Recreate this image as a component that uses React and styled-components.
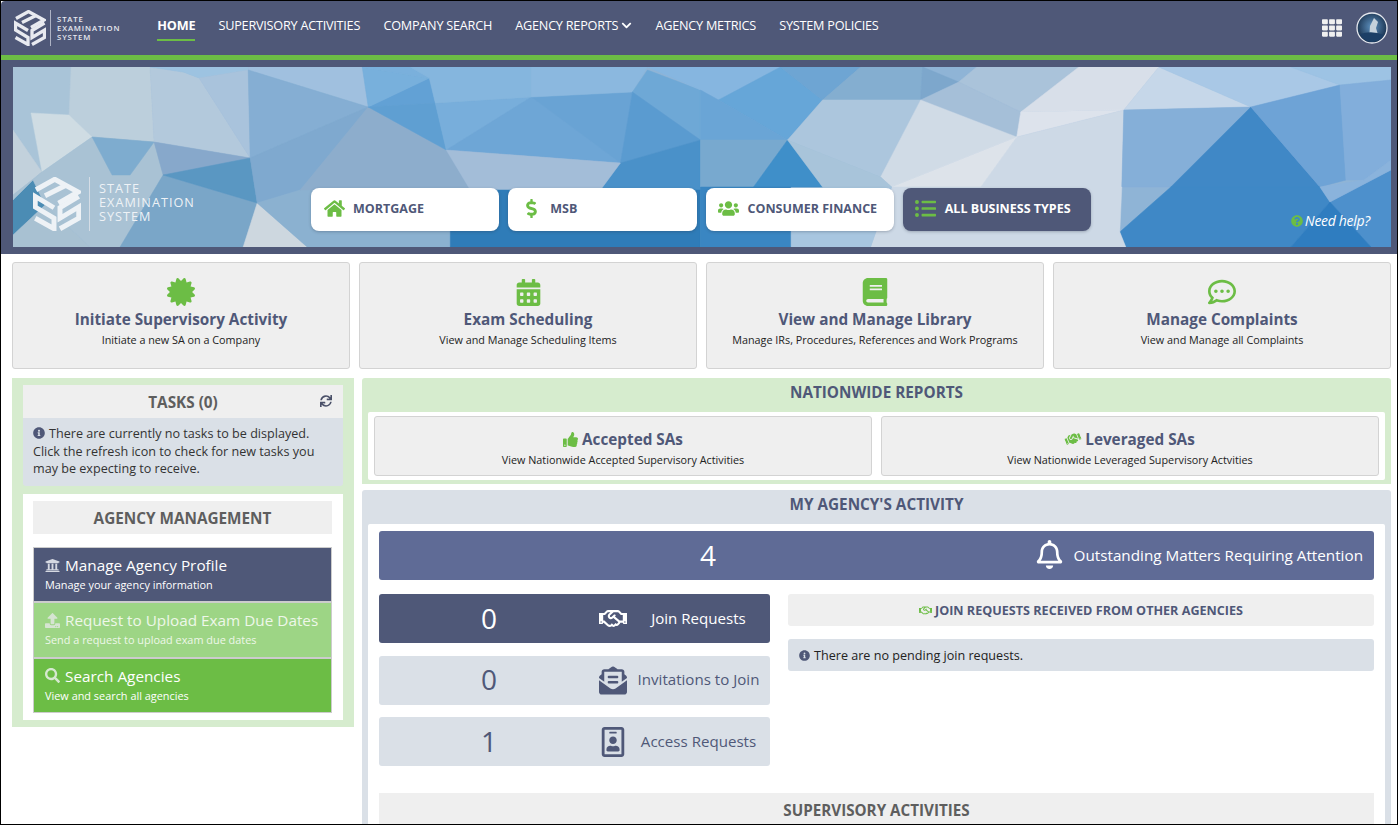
import React from "react";
import styled, { createGlobalStyle } from "styled-components";
import {
  FaCertificate, FaCalendarAlt, FaBook, FaRegCommentDots, FaThumbsUp, FaRegHandshake, FaHandshake,
  FaEnvelopeOpenText, FaRegIdBadge, FaUniversity, FaUpload, FaSearch, FaSync, FaInfoCircle, FaHome,
  FaDollarSign, FaUsers, FaListUl, FaQuestionCircle, FaTh, FaRegBell, FaChevronDown,
} from "react-icons/fa";

const NAVY = "#4f5878";
const GREEN = "#6cbd45";
const GREY = "#efefef";
const SLATE = "#dae0e7";
const PALE = "#d6ecce";

const Global = createGlobalStyle`
  html, body { margin: 0; padding: 0; background: #fff; }
  * { box-sizing: border-box; }
  body { font-family: "Open Sans", "Liberation Sans", sans-serif; }
`;

const Frame = styled.div`
  width: 1398px;
  height: 825px;
  border: 1px solid #000;
  overflow: hidden;
  background: #fff;
`;

const Header = styled.header`
  background: ${NAVY};
  padding-bottom: 7px;
  border-top-left-radius: 4px;
`;

const Nav = styled.nav`
  height: 54px;
  display: flex;
  align-items: center;
  padding: 0 9px 0 13px;
`;

const Brand = styled.div`
  display: flex;
  align-items: center;
  color: ${(p) => p.$color};
`;

const Divider = styled.span`
  display: block;
  width: 1px;
  align-self: stretch;
  background: ${(p) => p.$color};
  margin: ${(p) => p.$margin};
`;

const BrandText = styled.div`
  font-size: ${(p) => p.$size}px;
  line-height: ${(p) => p.$line}px;
  letter-spacing: ${(p) => p.$track}px;
  font-weight: ${(p) => p.$weight};
  padding: ${(p) => p.$pad};
  text-transform: uppercase;
`;

const Links = styled.div`
  display: flex;
  gap: 23.3px;
  margin-left: 37px;
  flex: 1;
`;

const NavLink = styled.a`
  display: flex;
  align-items: center;
  gap: 3px;
  height: 30px;
  margin-bottom: 4px;
  color: #fff;
  font-size: 12.7px;
  letter-spacing: -0.25px;
  font-weight: ${(p) => (p.$active ? 700 : 400)};
  border-bottom: 2px solid ${(p) => (p.$active ? GREEN : "transparent")};
`;

const NavRight = styled.div`
  display: flex;
  align-items: center;
  gap: 14px;
  color: #f0f0f0;
`;

const Stripe = styled.div`
  height: 5px;
  background: ${GREEN};
  margin-bottom: 7px;
`;

const Hero = styled.section`
  position: relative;
  margin: 0 6px 0 12px;
  height: 180px;
  overflow: hidden;
  display: flex;
  align-items: flex-end;
  padding-bottom: 16px;
  background: #8fb4d6;
`;

const HeroArt = styled.svg`
  position: absolute;
  inset: 0;
  width: 100%;
  height: 100%;
`;

const HeroBrand = styled.div`
  position: relative;
  flex: 0 0 298px;
  padding-left: 20px;
`;

const Types = styled.div`
  position: relative;
  display: flex;
  gap: 9px;
`;

const TypeButton = styled.a`
  width: 188.25px;
  height: 43px;
  border-radius: 8px;
  display: flex;
  align-items: center;
  gap: 8px;
  padding: 0 0 2px 12px;
  background: ${(p) => (p.$dark ? NAVY : "#fff")};
  color: ${(p) => (p.$dark ? "#fff" : NAVY)};
  font-weight: 700;
  font-size: 12.5px;
  box-shadow: 0 1px 3px rgba(40, 50, 70, 0.3);
`;

const TypeIcon = styled.span`
  flex: 0 0 22px;
  display: flex;
  justify-content: center;
  color: ${GREEN};
`;

const Help = styled.a`
  position: absolute;
  right: 21px;
  bottom: 17px;
  display: flex;
  align-items: center;
  gap: 2px;
  color: #fff;
  font-style: italic;
  font-size: 14px;
  letter-spacing: -0.3px;
  svg { color: ${GREEN}; }
`;

const Quick = styled.div`
  display: grid;
  grid-template-columns: repeat(4, 1fr);
  gap: 9px;
  padding: 8px 6px 0 11px;
`;

const QuickCard = styled.a`
  height: 107px;
  background: ${GREY};
  border: 1px solid #d3d3d3;
  border-radius: 3px;
  display: flex;
  flex-direction: column;
  align-items: center;
  padding-top: 14px;
  svg { color: ${GREEN}; }
`;

const IconSlot = styled.div`
  height: 30px;
  display: flex;
  align-items: center;
  justify-content: center;
`;

const QuickTitle = styled.div`
  margin-top: 1px;
  font-size: 15.3px;
  line-height: 22px;
  font-weight: 700;
  color: ${NAVY};
`;

const SubText = styled.div`
  font-size: 10.8px;
  line-height: 15px;
  color: #222;
  margin-top: ${(p) => p.$top}px;
`;

const Columns = styled.div`
  display: grid;
  grid-template-columns: 342px 1029px;
  gap: 8px;
  padding: 9px 6px 0 11px;
  align-items: start;
`;

const LeftPanel = styled.aside`
  background: ${PALE};
  padding: 7px 11px;
  height: 349px;
`;

const Head = styled.div`
  height: ${(p) => p.$h || 33}px;
  padding-bottom: ${(p) => p.$pb || 0}px;
  display: flex;
  align-items: center;
  justify-content: center;
  position: relative;
  background: ${(p) => p.$bg || "transparent"};
  color: ${(p) => p.$color || NAVY};
  font-size: 15.3px;
  font-weight: 700;
`;

const RefreshBtn = styled.span`
  position: absolute;
  right: 11px;
  top: 10px;
  color: #4a5068;
  display: flex;
`;

const TaskNote = styled.div`
  background: ${SLATE};
  height: 68px;
  padding: 7px 10px;
  font-size: 12.6px;
  line-height: 17.5px;
  color: #333;
  border-radius: 0 0 3px 3px;
  svg { color: ${NAVY}; vertical-align: -1px; margin-right: 4px; }
`;

const AgencyBox = styled.div`
  background: #fff;
  margin-top: 8px;
  height: 226px;
  padding: 7px 11px 0 10px;
`;

const MenuList = styled.div`
  margin-top: 13px;
  border: 1px solid #ccc;
  display: flex;
  flex-direction: column;
  gap: 2px;
  background: #ccc;
`;

const MenuItem = styled.a`
  height: 53.4px;
  background: ${(p) => p.$bg};
  color: ${(p) => p.$fg};
  padding: 6px 11px 0;
`;

const MenuTitle = styled.div`
  display: flex;
  align-items: center;
  gap: 5px;
  font-size: 15.3px;
  line-height: 22px;
  white-space: nowrap;
`;

const MenuSub = styled.div`
  font-size: 10.9px;
  line-height: 15px;
  margin-top: 1px;
`;

const RightCol = styled.main`
  display: flex;
  flex-direction: column;
  gap: 6px;
`;

const Panel = styled.section`
  background: ${(p) => p.$bg};
  border-radius: 3px 3px 0 0;
  padding: 0 6px ${(p) => p.$pb}px;
`;

const Inner = styled.div`
  background: #fff;
  padding: ${(p) => p.$pad};
  border-radius: 2px;
`;

const ReportGrid = styled.div`
  display: grid;
  grid-template-columns: 498px 498px;
  gap: 9px;
`;

const ReportCard = styled.a`
  height: 60px;
  background: ${GREY};
  border: 1px solid #d3d3d3;
  border-radius: 3px;
  display: flex;
  flex-direction: column;
  align-items: center;
  padding-top: 12px;
`;

const ReportTitle = styled.div`
  display: flex;
  align-items: center;
  gap: 4px;
  font-size: 15.3px;
  line-height: 20px;
  font-weight: 700;
  color: ${NAVY};
  svg { color: ${GREEN}; }
`;

const SlantedShake = styled(FaHandshake)`
  transform: rotate(-22deg);
`;

const Matters = styled.div`
  height: 49px;
  padding-bottom: 2px;
  background: #5f6b96;
  border-radius: 3px;
  display: flex;
  align-items: center;
  color: #fff;
`;

const MattersCount = styled.div`
  flex: 0 0 640px;
  padding-left: 18px;
  text-align: center;
  font-size: 28px;
`;

const MattersLabel = styled.div`
  flex: 1;
  display: flex;
  justify-content: flex-end;
  align-items: center;
  gap: 10px;
  padding-right: 11px;
  font-size: 15.25px;
  white-space: nowrap;
`;

const ActivityGrid = styled.div`
  display: grid;
  grid-template-columns: 391px 586px;
  gap: 18px;
  margin-top: 14px;
  height: 199px;
`;

const Stats = styled.div`
  display: flex;
  flex-direction: column;
  gap: 12.5px;
`;

const Stat = styled.a`
  height: 49px;
  border-radius: 3px;
  display: grid;
  grid-template-columns: 220px 28px 1fr;
  align-items: center;
  background: ${(p) => (p.$dark ? NAVY : SLATE)};
  color: ${(p) => (p.$dark ? "#fff" : NAVY)};
`;

const StatCount = styled.div`
  text-align: center;
  font-size: 28px;
  padding-bottom: 2px;
`;

const StatIcon = styled.div`
  display: flex;
  justify-content: center;
`;

const StatLabel = styled.div`
  text-align: center;
  font-size: 15.1px;
  padding-bottom: 2px;
`;

const JoinHead = styled.div`
  height: 32px;
  background: ${GREY};
  border-radius: 3px;
  display: flex;
  align-items: center;
  justify-content: center;
  gap: 3px;
  font-size: 12.6px;
  font-weight: 700;
  color: ${NAVY};
  svg { color: ${GREEN}; }
`;

const JoinNote = styled.div`
  height: 32px;
  margin-top: 13px;
  background: ${SLATE};
  border-radius: 3px;
  display: flex;
  align-items: center;
  gap: 4px;
  padding-left: 11px;
  font-size: 12.6px;
  color: #222;
  svg { color: ${NAVY}; }
`;

const SectionBar = styled.div`
  height: 36px;
  padding-bottom: 3px;
  background: ${GREY};
  display: flex;
  align-items: center;
  justify-content: center;
  font-size: 15.2px;
  font-weight: 700;
  color: #5e5e5e;
`;

const Logo = ({ size }) => (
  <svg width={size} height={size * 36 / 32} viewBox="0 0 32 36" fill="none" stroke="currentColor" strokeWidth="3.3" strokeLinejoin="miter">
    <polyline points="2,8.5 14.5,1.5 30,10 17,17.5" />
    <polyline points="8,12.5 22,5.5" />
    <polyline points="14,20.5 1.5,13 1.5,20 14,27.5 14,34.5 1.5,27.5" />
    <polyline points="30.5,13 18,20.5 18,27.5 30.5,20 30.5,27.5 18,34.5" />
  </svg>
);

const shards = [
  ["13,67 71,67 69,115 31,113 42,172 13,130", "#a9c4d8"],
  ["71,67 150,67 154,142 92,137 69,115", "#bccfdc"],
  ["150,67 183,72 199,78 250,158 154,142", "#b3c9dc"],
  ["150,67 248,67 248,70 199,78 183,72", "#9dc3e1"],
  ["199,78 248,70 250,158", "#a9c3dc"],
  ["31,113 69,115 92,137 42,172", "#cfdce3"],
  ["13,130 42,172 13,195", "#c2d1dc"],
  ["13,200 33,180 45,205 13,235", "#4b8cb4"],
  ["13,195 42,172 33,180 13,200", "#a8c1d2"],
  ["13,235 45,205 90,247 13,247", "#a8c1d2"],
  ["42,172 92,137 154,142 163,175 120,247 90,247 45,205 33,180", "#a9c2d4"],
  ["92,137 154,142 130,175 112,175", "#7eaccf"],
  ["154,142 250,158 163,175", "#87a8cb"],
  ["163,175 257,203 243,247 120,247", "#7aa6c8"],
  ["163,175 250,158 257,203", "#5a97c2"],
  ["257,203 243,247 307,247", "#cdd7df"],
  ["248,67 362,67 368,107 248,70", "#a0c0df"],
  ["248,70 368,107 250,158", "#85aed3"],
  ["250,158 368,107 300,190 257,203", "#7fa9cf"],
  ["257,203 300,190 470,190 450,247 307,247", "#8bb1d0"],
  ["368,107 446,150 470,190 300,190", "#8dadcc"],
  ["368,107 435,103 429,78", "#62a1d5"],
  ["362,67 429,78 368,107", "#78b0dc"],
  ["362,67 410,67 429,78", "#7ab0dc"],
  ["368,107 435,103 446,150", "#5f9fd2"],
  ["435,103 531,97 446,150", "#78aedb"],
  ["531,97 620,163 446,150", "#6ea6d6"],
  ["531,97 632,92 620,163", "#69a3d4"],
  ["410,67 531,67 531,97 435,103 429,78", "#85b6de"],
  ["531,67 647,67 632,92 531,97", "#8bb8df"],
  ["647,70 700,90 700,140 632,92", "#6ea8d6"],
  ["632,92 700,140 620,163", "#5a9bd0"],
  ["620,163 700,140 700,190 600,190", "#4a91c9"],
  ["446,150 620,163 600,190 470,190", "#a3bdd8"],
  ["450,190 700,190 700,247 450,247", "#2f7cb8"],
  ["647,67 780,67 718,100 700,90", "#86b6e0"],
  ["718,100 780,67 822,100 787,140", "#66a6d8"],
  ["700,90 718,100 787,140 700,140", "#6aa5d6"],
  ["780,67 860,67 822,100", "#6ea5d3"],
  ["860,67 922,67 920,100 822,100", "#84aed0"],
  ["922,67 958,82 920,100", "#7da7cc"],
  ["958,82 976,67 1078,67 1020,112", "#aac3da"],
  ["920,100 958,82 1020,112 1016,137", "#a5bfd8"],
  ["822,100 920,100 880,177 787,140", "#acc6dd"],
  ["920,100 1016,137 891,187 880,177", "#d0dbe6"],
  ["1078,67 1158,67 1123,110 1020,112", "#d8dfe9"],
  ["1020,112 1123,110 1016,137", "#dde3ec"],
  ["1016,137 1123,110 1121,187 980,187", "#cdd9e6"],
  ["1016,137 980,187 891,187", "#dde3ea"],
  ["1158,67 1250,107 1123,110", "#c6d7e9"],
  ["1158,67 1290,67 1339,85 1250,107", "#a9c8e6"],
  ["1290,67 1390,67 1390,80 1339,85", "#9dc3e4"],
  ["1123,110 1250,107 1170,187 1121,187", "#85afd8"],
  ["1250,107 1170,187 1319,187", "#4088c6"],
  ["1250,107 1339,85 1345,180 1319,187", "#6ea3d6"],
  ["1339,85 1390,80 1390,160 1363,180 1345,180", "#82aedb"],
  ["1119,232 1170,187 1319,187 1329,202 1290,247 1125,247", "#3f88c6"],
  ["1329,202 1390,170 1390,247 1370,247", "#4d90cc"],
  ["1319,187 1363,180 1390,160 1390,170 1329,202", "#8ab3dc"],
  ["1329,202 1290,247 1370,247", "#2f7dc0"],
  ["891,187 1121,187 1119,232 1125,247 870,247", "#cdd9e6"],
  ["790,187 891,187 870,247 790,247", "#a8c6e0"],
  ["700,140 787,140 753,187 700,187", "#78a9cf"],
  ["787,140 753,187 822,187", "#3f8fc9"],
  ["787,140 880,177 891,187 822,187", "#a8c4da"],
  ["700,187 790,187 790,247 700,247", "#3a86c2"],
];

const types = [
  { label: "MORTGAGE", Icon: FaHome, size: 21 },
  { label: "MSB", Icon: FaDollarSign, size: 19 },
  { label: "CONSUMER FINANCE", Icon: FaUsers, size: 21 },
  { label: "ALL BUSINESS TYPES", Icon: FaListUl, size: 21, dark: true },
];

const quick = [
  { title: "Initiate Supervisory Activity", sub: "Initiate a new SA on a Company", Icon: FaCertificate, size: 28 },
  { title: "Exam Scheduling", sub: "View and Manage Scheduling Items", Icon: FaCalendarAlt, size: 27 },
  { title: "View and Manage Library", sub: "Manage IRs, Procedures, References and Work Programs", Icon: FaBook, size: 28 },
  { title: "Manage Complaints", sub: "View and Manage all Complaints", Icon: FaRegCommentDots, size: 28 },
];

const stats = [
  { n: 0, label: "Join Requests", Icon: FaRegHandshake, size: 29, dark: true },
  { n: 0, label: "Invitations to Join", Icon: FaEnvelopeOpenText, size: 29 },
  { n: 1, label: "Access Requests", Icon: FaRegIdBadge, size: 30 },
];

export default function App() {
  return (
    <Frame>
      <Global />
      <Header>
        <Nav>
          <Brand $color="#e8eaf0">
            <Logo size={32} />
            <Divider $color="#aeb3c4" $margin="0 6px 0 4px" />
            <BrandText $size={7.7} $line={9} $track={0.9} $weight={600} $pad="1px 0 0">
              State<br />Examination<br />System
            </BrandText>
          </Brand>
          <Links>
            <NavLink $active>HOME</NavLink>
            <NavLink>SUPERVISORY ACTIVITIES</NavLink>
            <NavLink>COMPANY SEARCH</NavLink>
            <NavLink>AGENCY REPORTS <FaChevronDown size={11} /></NavLink>
            <NavLink>AGENCY METRICS</NavLink>
            <NavLink>SYSTEM POLICIES</NavLink>
          </Links>
          <NavRight>
            <FaTh size={20} />
            <svg width="32" height="32" viewBox="0 0 32 32">
              <defs>
                <radialGradient id="av" cx="50%" cy="45%" r="60%">
                  <stop offset="0%" stopColor="#5f93c2" />
                  <stop offset="100%" stopColor="#10253f" />
                </radialGradient>
              </defs>
              <circle cx="16" cy="16" r="15" fill="url(#av)" stroke="#e6e9ef" strokeWidth="1.3" />
              <path d="M13 27 L14 14 L18 6 L22 10 L20 16 L23 26 Z" fill="#c5d2dc" />
              <path d="M4 22 Q16 18 28 23 Q24 30 16 30 Q8 30 4 22 Z" fill="#1c3f66" />
            </svg>
          </NavRight>
        </Nav>
        <Stripe />
        <Hero>
          <HeroArt viewBox="13 67 1377 180" preserveAspectRatio="none" aria-hidden="true">
            {shards.map(([points, fill]) => (
              <polygon key={points} points={points} fill={fill} stroke={fill} strokeWidth="0.5" />
            ))}
          </HeroArt>
          <HeroBrand>
            <Brand $color="#eef2f6">
              <Logo size={48} />
              <Divider $color="#d5dde6" $margin="0 9px 0 8px" />
              <BrandText $size={12.7} $line={14} $track={1} $weight={500} $pad="0 0 4px">
                State<br />Examination<br />System
              </BrandText>
            </Brand>
          </HeroBrand>
          <Types>
            {types.map(({ label, Icon, size, dark }) => (
              <TypeButton key={label} $dark={dark}>
                <TypeIcon><Icon size={size} /></TypeIcon>
                {label}
              </TypeButton>
            ))}
          </Types>
          <Help><FaQuestionCircle size={12} />Need help?</Help>
        </Hero>
      </Header>

      <Quick>
        {quick.map(({ title, sub, Icon, size }) => (
          <QuickCard key={title}>
            <IconSlot><Icon size={size} /></IconSlot>
            <QuickTitle>{title}</QuickTitle>
            <SubText $top={2}>{sub}</SubText>
          </QuickCard>
        ))}
      </Quick>

      <Columns>
        <LeftPanel>
          <Head $bg={GREY} $color="#5e5e5e">
            TASKS (0)
            <RefreshBtn><FaSync size={12} /></RefreshBtn>
          </Head>
          <TaskNote>
            <FaInfoCircle size={12} />
            There are currently no tasks to be displayed. Click the refresh icon to check for new tasks you may be expecting to receive.
          </TaskNote>
          <AgencyBox>
            <Head $bg={GREY} $color="#5e5e5e">AGENCY MANAGEMENT</Head>
            <MenuList>
              <MenuItem $bg={NAVY} $fg="#fff">
                <MenuTitle><FaUniversity size={15} color="#d6d9e2" />Manage Agency Profile</MenuTitle>
                <MenuSub>Manage your agency information</MenuSub>
              </MenuItem>
              <MenuItem $bg="#9dd585" $fg="#eef7e9">
                <MenuTitle><FaUpload size={15} color="#d6e4d2" />Request to Upload Exam Due Dates</MenuTitle>
                <MenuSub>Send a request to upload exam due dates</MenuSub>
              </MenuItem>
              <MenuItem $bg={GREEN} $fg="#fff">
                <MenuTitle><FaSearch size={15} color="#d6e8d0" />Search Agencies</MenuTitle>
                <MenuSub>View and search all agencies</MenuSub>
              </MenuItem>
            </MenuList>
          </AgencyBox>
        </LeftPanel>

        <RightCol>
          <Panel $bg={PALE} $pb={4}>
            <Head $h={34} $pb={6}>NATIONWIDE REPORTS</Head>
            <Inner $pad="4px 6px">
              <ReportGrid>
                <ReportCard>
                  <ReportTitle><FaThumbsUp size={15} />Accepted SAs</ReportTitle>
                  <SubText $top={3}>View Nationwide Accepted Supervisory Activities</SubText>
                </ReportCard>
                <ReportCard>
                  <ReportTitle><SlantedShake size={16} />Leveraged SAs</ReportTitle>
                  <SubText $top={3}>View Nationwide Leveraged Supervisory Actvities</SubText>
                </ReportCard>
              </ReportGrid>
            </Inner>
          </Panel>
          <Panel $bg={SLATE} $pb={0}>
            <Head $h={34} $pb={6}>MY AGENCY'S ACTIVITY</Head>
            <Inner $pad="7px 11px 20px">
              <Matters>
                <MattersCount>4</MattersCount>
                <MattersLabel><FaRegBell size={29} />Outstanding Matters Requiring Attention</MattersLabel>
              </Matters>
              <ActivityGrid>
                <Stats>
                  {stats.map(({ n, label, Icon, size, dark }) => (
                    <Stat key={label} $dark={dark}>
                      <StatCount>{n}</StatCount>
                      <StatIcon><Icon size={size} /></StatIcon>
                      <StatLabel>{label}</StatLabel>
                    </Stat>
                  ))}
                </Stats>
                <div>
                  <JoinHead><FaRegHandshake size={13} />JOIN REQUESTS RECEIVED FROM OTHER AGENCIES</JoinHead>
                  <JoinNote><FaInfoCircle size={11} />There are no pending join requests.</JoinNote>
                </div>
              </ActivityGrid>
              <SectionBar>SUPERVISORY ACTIVITIES</SectionBar>
            </Inner>
          </Panel>
        </RightCol>
      </Columns>
    </Frame>
  );
}
